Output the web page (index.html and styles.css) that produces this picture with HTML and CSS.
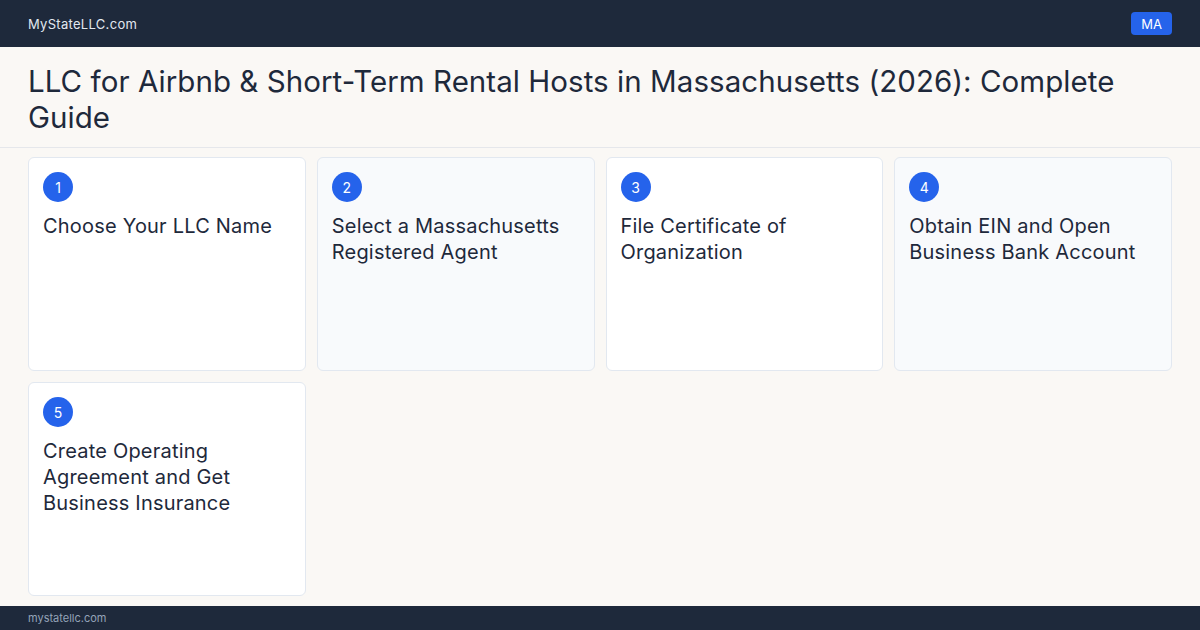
FILE: index.html
```html
<!DOCTYPE html>
<html>
<head>
<meta charset="utf-8">
<link rel="stylesheet" href="styles.css">
</head>
<body>
<header class="topbar">
  <span class="brand">MyStateLLC.com</span>
  <span class="badge">MA</span>
</header>
<section class="hero">
  <h1 class="title">LLC for Airbnb &amp; Short-Term Rental Hosts in Massachusetts (2026): Complete Guide</h1>
</section>
<main class="steps">
  <div class="card"><span class="num">1</span><p class="step">Choose Your LLC Name</p></div>
  <div class="card alt"><span class="num">2</span><p class="step">Select a Massachusetts Registered Agent</p></div>
  <div class="card"><span class="num">3</span><p class="step">File Certificate of Organization</p></div>
  <div class="card alt"><span class="num">4</span><p class="step">Obtain EIN and Open Business Bank Account</p></div>
  <div class="card"><span class="num">5</span><p class="step">Create Operating Agreement and Get Business Insurance</p></div>
</main>
<footer class="footer">mystatellc.com</footer>
</body>
</html>
```
FILE: styles.css
```css
* { box-sizing: border-box; }
html, body { margin: 0; padding: 0; }
body {
  width: 1200px;
  height: 630px;
  overflow: hidden;
  background: #faf8f5;
  font-family: Inter, "Noto Sans", sans-serif;
  color: #1e293b;
  display: flex;
  flex-direction: column;
}
.topbar {
  height: 47px;
  background: #1e293b;
  display: flex;
  align-items: center;
  justify-content: space-between;
  padding: 0 28px;
  flex-shrink: 0;
}
.brand {
  color: #e2e8f0;
  font-size: 13px;
  letter-spacing: 0.3px;
}
.badge {
  background: #2563eb;
  color: #ffffff;
  font-size: 13px;
  border-radius: 4px;
  height: 23px;
  width: 41px;
  display: flex;
  align-items: center;
  justify-content: center;
}
.hero {
  padding: 16px 28px 12px;
  border-bottom: 1px solid #e5e7eb;
  flex-shrink: 0;
}
.title {
  margin: 0;
  font-size: 29.5px;
  line-height: 36px;
  font-weight: 400;
  letter-spacing: 0.05px;
  color: #1e293b;
}
.steps {
  flex: 1;
  padding: 9px 28px 10px;
  display: grid;
  grid-template-columns: repeat(4, 1fr);
  grid-template-rows: 214px 214px;
  column-gap: 11px;
  row-gap: 11px;
}
.card {
  background: #ffffff;
  border: 1px solid #e2e8f0;
  border-radius: 6px;
  padding: 14px;
}
.card.alt { background: #f8fafc; }
.num {
  display: flex;
  width: 30px;
  height: 30px;
  border-radius: 50%;
  background: #2563eb;
  color: #ffffff;
  font-size: 14px;
  align-items: center;
  justify-content: center;
}
.step {
  margin: 11px 0 0;
  font-size: 20px;
  line-height: 26px;
  letter-spacing: 0.2px;
  color: #1e293b;
}
.footer {
  height: 24px;
  background: #1e293b;
  color: #94a3b8;
  font-size: 11px;
  padding: 0 28px;
  display: flex;
  align-items: center;
  flex-shrink: 0;
}
```
